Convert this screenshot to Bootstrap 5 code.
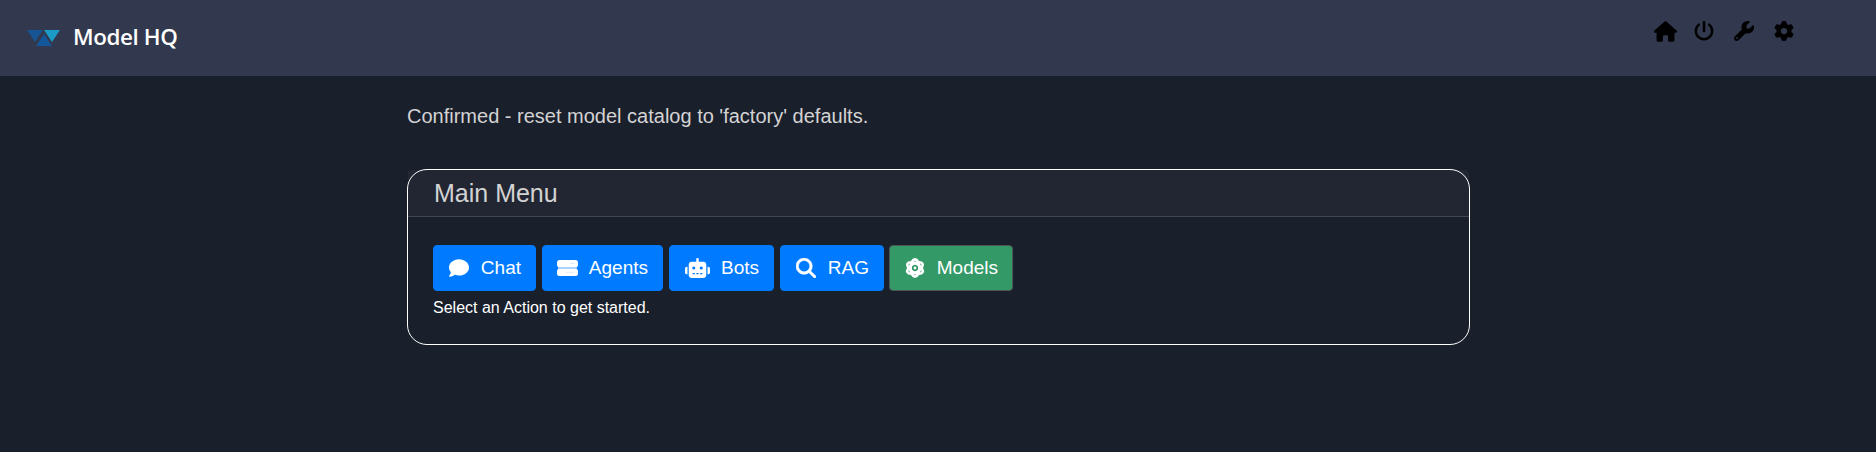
<!DOCTYPE html>
<html lang="en">
<head>
<meta charset="utf-8">
<meta name="viewport" content="width=device-width, initial-scale=1">
<title>Model HQ</title>
<link href="https://cdn.jsdelivr.net/npm/bootstrap@5.3.0/dist/css/bootstrap.min.css" rel="stylesheet">
<style>
  body { background: #1a1f2c; color: #d3d3d3; font-family: "Liberation Sans", Arial, sans-serif; overflow: hidden; }
  svg { fill: currentColor; display: block; flex: none; }
  .topbar { height: 76px; background: #32384d; padding: 0 62px 0 27px; }
  .brand { color: #fff; font: 600 22.4px/30px "Open Sans", "Noto Sans", sans-serif; letter-spacing: -.4px; margin: -2px 0 0 12px; }
  .tools { display: grid; grid-template-columns: repeat(4, 40px); align-items: start; color: #000; padding-top: 21px; margin-right: -27px; }
  .topbar .tools { margin-right: -20px; width: 180px; }
  .page { width: 1063px; margin-left: 407px; }
  .notice { font-size: 20px; line-height: 30px; margin: 25px 0 38px; }
  .menu { --bs-card-bg: #1a1f2c; --bs-card-border-color: #fff; --bs-card-color: #fff; height: 176px; border-radius: 20px; }
  .menu .card-header { height: 47px; padding: 0 25px 0 26px; border-radius: 3px 3px 0 0; background: rgba(255,255,255,.035); border-bottom: 1px solid #444550; color: #d3d3d3; font-size: 25px; line-height: 46px; }
  .menu .card-body { padding: 28px 25px 0; }
  .action { --bs-btn-font-size: 19px; --bs-btn-color: #fff; --bs-btn-bg: #007bff; --bs-btn-border-color: #007bff; --bs-btn-hover-bg: #0069d9; --bs-btn-hover-color: #fff; --bs-btn-border-radius: 4px; height: 46px; padding: 0 14px 0 15px; white-space: nowrap; }
  .action.models { --bs-btn-bg: #339966; --bs-btn-border-color: #4c5757; }
  .hint { font-size: 16px; line-height: 24px; margin: 5px 0 0; }
</style>
</head>
<body>
<header class="topbar d-flex justify-content-between">
  <div class="d-flex align-items-center">
    <svg width="34" height="18" viewBox="0 0 34 18"><path fill="#165493" d="M0 1h16L8 13z"/><path fill="#1b9bc5" d="M17 1h16l-8 12z"/><path fill="#14569a" d="M9 17h16L17 5z"/></svg>
    <span class="brand">Model HQ</span>
  </div>
  <nav class="tools">
    <svg width="23" height="21" viewBox="0 0 576 512"><path d="M575.8 255.5c0 18-15 32.1-32 32.1h-32l.7 160.2c0 2.7-.2 5.4-.5 8.1V472c0 22.1-17.9 40-40 40H392c-22.1 0-40-17.9-40-40V384c0-17.7-14.3-32-32-32H256c-17.7 0-32 14.3-32 32v88c0 22.1-17.9 40-40 40H104c-22.1 0-40-17.9-40-40V287.6H32c-18 0-32-14-32-32.1c0-9 3-17 10-24L266.4 8c7-7 15-8 22-8s15 2 21 7L564.8 231.5c8 7 12 15 11 24z"/></svg>
    <svg width="20" height="20" viewBox="0 0 512 512"><path d="M288 32c0-17.700-14.300-32-32-32s-32 14.300-32 32v224c0 17.700 14.300 32 32 32s32-14.300 32-32zM143.500 120.600c13.600-11.300 15.400-31.500 4.100-45.100s-31.500-15.400-45.100-4.100C49.700 115.400 16 181.800 16 256c0 132.500 107.500 240 240 240s240-107.500 240-240c0-74.200-33.800-140.600-86.600-184.600c-13.600-11.300-33.800-9.400-45.100 4.100s-9.400 33.800 4.100 45.100C407.200 152.900 432 201.500 432 256c0 97.200-78.800 176-176 176S80 353.200 80 256c0-54.500 24.700-103.100 63.500-135.400z"/></svg>
    <svg width="20" height="20" viewBox="0 0 512 512"><path d="M352 320c88.400 0 160-71.600 160-160c0-15.300-2.200-30.100-6.200-44.200c-3.100-10.800-16.400-13.200-24.300-5.300l-76.800 76.800c-3 3-7.100 4.700-11.300 4.700H336c-8.800 0-16-7.200-16-16V118.600c0-4.200 1.700-8.300 4.700-11.300l76.800-76.800c7.900-7.900 5.400-21.200-5.300-24.300C382.100 2.200 367.300 0 352 0C263.600 0 192 71.600 192 160c0 19.100 3.400 37.500 9.500 54.500L19.900 396.100C7.200 408.800 0 426.100 0 444.100C0 481.600 30.400 512 67.900 512c18 0 35.300-7.200 48-19.900L297.500 310.500c17 6.200 35.400 9.500 54.500 9.500zM80 408a24 24 0 1 1 0 48 24 24 0 1 1 0-48z"/></svg>
    <svg width="20" height="20" viewBox="0 0 512 512"><path d="M495.900 166.600c3.200 8.700.5 18.400-6.400 24.600l-43.300 39.400c1.100 8.300 1.700 16.800 1.700 25.400s-.6 17.100-1.700 25.400l43.300 39.400c6.900 6.200 9.600 15.900 6.400 24.600c-4.400 11.900-9.700 23.300-15.800 34.300l-4.700 8.100c-6.600 11-14 21.400-22.100 31.200c-5.900 7.200-15.700 9.600-24.500 6.800l-55.700-17.700c-13.400 10.300-28.200 18.900-44 25.400l-12.500 57.100c-2 9.100-9 16.300-18.200 17.800c-13.800 2.300-28 3.500-42.500 3.500s-28.700-1.200-42.500-3.500c-9.200-1.500-16.200-8.700-18.200-17.800l-12.500-57.100c-15.800-6.500-30.600-15.100-44-25.400L83.100 425.900c-8.800 2.800-18.600.3-24.500-6.800c-8.100-9.800-15.500-20.200-22.100-31.200l-4.700-8.100c-6.100-11-11.400-22.400-15.800-34.300c-3.200-8.700-.5-18.400 6.400-24.600l43.300-39.400C64.600 273.100 64 264.600 64 256s.6-17.100 1.700-25.400L22.400 191.200c-6.900-6.200-9.600-15.900-6.400-24.600c4.400-11.900 9.700-23.300 15.800-34.300l4.700-8.100c6.600-11 14-21.400 22.100-31.200c5.900-7.200 15.700-9.600 24.500-6.800l55.700 17.700c13.400-10.300 28.200-18.900 44-25.400l12.500-57.100c2-9.100 9-16.300 18.200-17.800C227.300 1.200 241.500 0 256 0s28.700 1.200 42.500 3.500c9.200 1.500 16.200 8.700 18.200 17.800l12.500 57.100c15.800 6.500 30.600 15.100 44 25.400l55.700-17.700c8.800-2.800 18.600-.3 24.500 6.800c8.100 9.800 15.500 20.200 22.100 31.200l4.700 8.100c6.100 11 11.400 22.400 15.800 34.300zM256 336a80 80 0 1 0 0-160 80 80 0 1 0 0 160z"/></svg>
  </nav>
</header>
<main class="page">
  <p class="notice">Confirmed - reset model catalog to 'factory' defaults.</p>
  <section class="card menu">
    <div class="card-header">Main Menu</div>
    <div class="card-body">
      <div class="d-flex">
        <button class="btn action d-flex align-items-center" style="width:103px;margin-right:6px"><svg width="20" height="20" viewBox="0 0 512 512"><path d="M512 240c0 114.900-114.600 208-256 208c-37.100 0-72.300-6.400-104.100-17.900c-11.900 8.700-31.300 20.600-54.300 30.600C73.600 471.100 44.700 480 16 480c-6.500 0-12.300-3.900-14.800-9.900c-2.500-6-1.100-12.800 3.400-17.400c1-1 3-3 6.500-7.400c4.100-5 9.600-12.400 15.200-21.600c10-16.600 19.500-38.400 21.400-62.900C17.700 326.800 0 285.100 0 240C0 125.100 114.600 32 256 32s256 93.100 256 208z"/></svg><span class="ms-auto">Chat</span></button>
        <button class="btn action d-flex align-items-center" style="width:121px;margin-right:6px;padding-left:14px"><svg width="21" height="16" viewBox="0 0 21 16"><rect y="0" width="21" height="7.200" rx="2.500"/><rect y="7" x="1" width="19" height="2" opacity=".55"/><rect y="8.800" width="21" height="7.200" rx="2.500"/><path d="M13 3.500h5M9 12.300h8" stroke="#dcecff"/></svg><span class="ms-auto">Agents</span></button>
        <button class="btn action d-flex align-items-center" style="width:105px;margin-right:6px"><svg width="25" height="20" viewBox="0 0 640 512"><path fill-rule="evenodd" d="M320 0c17.700 0 32 14.300 32 32V96H472c39.800 0 72 32.200 72 72V440c0 39.800-32.200 72-72 72H168c-39.800 0-72-32.200-72-72V168c0-39.800 32.200-72 72-72H288V32c0-17.700 14.300-32 32-32zM208 384a16 16 0 0 0 0 32h32a16 16 0 0 0 0-32zm96 0a16 16 0 0 0 0 32h32a16 16 0 0 0 0-32zm96 0a16 16 0 0 0 0 32h32a16 16 0 0 0 0-32zM264 256a40 40 0 1 0-80 0 40 40 0 1 0 80 0zm152 40a40 40 0 1 0 0-80 40 40 0 1 0 0 80zM48 224H64V416H48c-26.500 0-48-21.500-48-48V272c0-26.500 21.500-48 48-48zm544 0c26.500 0 48 21.500 48 48v96c0 26.500-21.500 48-48 48H576V224z"/></svg><span class="ms-auto">Bots</span></button>
        <button class="btn action d-flex align-items-center" style="width:104px;margin-right:5px"><svg width="20" height="20" viewBox="0 0 512 512"><path stroke="currentColor" stroke-width="12" d="M416 208c0 45.900-14.900 88.300-40 122.700L502.600 457.400c12.500 12.500 12.500 32.800 0 45.300s-32.800 12.500-45.300 0L330.700 376c-34.400 25.200-76.800 40-122.700 40C93.100 416 0 322.900 0 208S93.100 0 208 0S416 93.100 416 208zM208 352a144 144 0 1 0 0-288 144 144 0 1 0 0 288z"/></svg><span class="ms-auto">RAG</span></button>
        <button class="btn action models d-flex align-items-center" style="width:124px"><svg width="20" height="20" viewBox="0 0 512 512"><g fill="none" stroke="currentColor" stroke-width="68"><ellipse cx="256" cy="256" rx="112" ry="220"/><ellipse cx="256" cy="256" rx="112" ry="220" transform="rotate(60 256 256)"/><ellipse cx="256" cy="256" rx="112" ry="220" transform="rotate(120 256 256)"/></g><circle cx="256" cy="256" r="36"/></svg><span class="ms-auto">Models</span></button>
      </div>
      <p class="hint">Select an Action to get started.</p>
    </div>
  </section>
</main>
<script src="https://cdn.jsdelivr.net/npm/bootstrap@5.3.0/dist/js/bootstrap.bundle.min.js"></script>
</body>
</html>
